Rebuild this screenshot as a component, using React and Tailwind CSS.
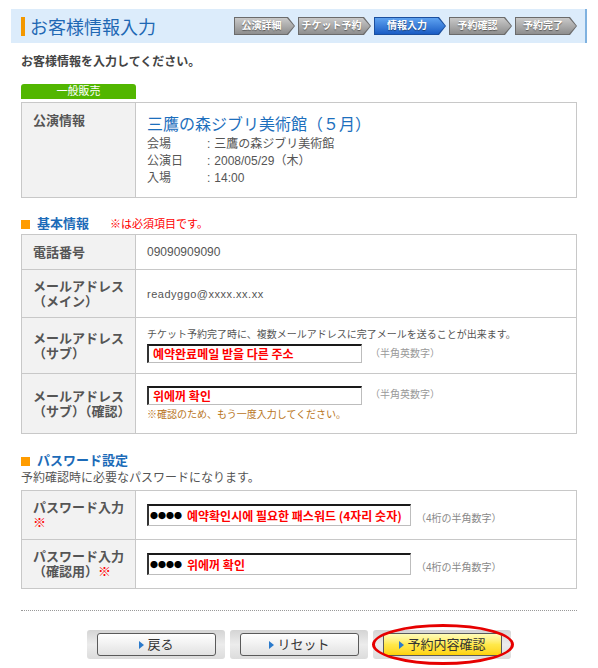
import React from "react";

const steps = [
  { label: "公演詳細", width: "w-[61px]" },
  { label: "チケット予約", width: "w-[73px]" },
  { label: "情報入力", width: "w-[72px]", active: true },
  { label: "予約確認", width: "w-[63px]" },
  { label: "予約完了", width: "w-[62px]" },
];

const StepTab = ({ label, width, active }) => (
  <div
    className={`${width} h-[18px] p-px ${active ? "bg-[#1b4f9e]" : "bg-[#6b6b6b]"} [clip-path:polygon(0_0,calc(100%_-_7px)_0,100%_50%,calc(100%_-_7px)_100%,0_100%)]`}
  >
    <div
      className={`h-full flex items-center justify-center pr-[6px] whitespace-nowrap text-[10px] font-bold text-white leading-none [text-shadow:0_1px_1px_rgba(0,0,0,0.45)] [clip-path:polygon(0_0,calc(100%_-_7px)_0,100%_50%,calc(100%_-_7px)_100%,0_100%)] ${
        active ? "bg-linear-to-b from-[#5ea2f0] to-[#1a5cc4]" : "bg-linear-to-b from-[#c9c9c9] to-[#8e8e8e]"
      }`}
    >
      {label}
    </div>
  </div>
);

const Row = ({ label, h, children }) => (
  <div className={`flex ${h} border-b border-[#c8c8c8]`}>
    <div className="w-[114px] shrink-0 bg-[#f2f2f2] border-r border-[#c8c8c8] flex items-center pl-[11px] text-[13px] font-bold leading-[15px] text-[#555]">
      <div>{label}</div>
    </div>
    <div className="flex-1 flex flex-col justify-center pl-[11px]">{children}</div>
  </div>
);

const FakeInput = ({ className, children }) => (
  <div
    className={`${className} shrink-0 bg-white border-t-2 border-l-2 border-r border-b border-t-[#1a1a1a] border-l-[#333] border-r-[#bdbdbd] border-b-[#bdbdbd] flex items-center pl-[4px] whitespace-nowrap text-[12px] font-bold leading-none text-[#ff0000] font-['Noto_Sans_CJK_KR',sans-serif]`}
  >
    {children}
  </div>
);

const Heading = ({ title, children, className }) => (
  <div className={`flex items-center ml-[21px] h-[16px] ${className}`}>
    <span className="w-[9px] h-[9px] bg-[#ff9c00]" />
    <span className="ml-[7px] text-[13px] font-bold leading-[16px] text-[#1c6bb8]">{title}</span>
    {children}
  </div>
);

const Btn = ({ label, yellow }) => (
  <div className="w-[138px] h-[29px] rounded-[3px] bg-linear-to-b from-[#d4d4d4] via-[#ececec] to-[#dcdcdc] pl-[10px] pr-[9px] py-[3px]">
    <div
      className={`h-full rounded-[3px] border border-[#5a5a5a] flex items-center justify-center text-[13px] text-[#333] ${
        yellow ? "bg-linear-to-b from-[#fffcb8] via-[#ffe94a] to-[#ffd200]" : "bg-linear-to-b from-[#ffffff] to-[#e2e2e2]"
      }`}
    >
      <span className="w-0 h-0 border-y-[4px] border-y-transparent border-l-[5px] border-l-[#2a7acc] mr-[3px]" />
      {label}
    </div>
  </div>
);

export default function App() {
  return (
    <div className="relative w-[598px] h-[668px] overflow-hidden bg-white text-[#555] font-['Liberation_Sans','Noto_Sans_CJK_JP',sans-serif]">
      {/* header */}
      <div className="mt-[9px] ml-[11px] w-[576px] h-[34px] bg-[#dcecfb] border-r-2 border-[#7fb2e0] flex items-center pr-[8px]">
        <span className="ml-[10px] w-[4px] h-[19px] bg-[#f39800]" />
        <span className="ml-[5px] text-[18px] leading-[20px] text-[#1f68b4] font-['Noto_Sans_CJK_JP',sans-serif]">お客様情報入力</span>
        <div className="ml-auto flex items-center gap-[3px]">
          {steps.map((s) => (
            <StepTab key={s.label} {...s} />
          ))}
        </div>
      </div>

      <p className="mt-[12px] ml-[21px] text-[12px] font-bold leading-[14px] text-[#444]">お客様情報を入力してください。</p>

      <div className="mt-[15px] ml-[21px] w-[115px] h-[15px] rounded-t-[3px] bg-[#52b600] text-white text-[11px] leading-[15px] text-center">
        一般販売
      </div>

      {/* 公演情報 */}
      <div className="mt-[3px] ml-[21px] w-[556px] border-t border-x border-[#c8c8c8]">
        <div className="flex h-[95px] border-b border-[#c8c8c8]">
          <div className="w-[114px] shrink-0 bg-[#f2f2f2] border-r border-[#c8c8c8] pl-[11px] pt-[10px] text-[13px] font-bold leading-[16px] text-[#555]">
            公演情報
          </div>
          <div className="flex-1 pl-[11px] pt-[12px]">
            <div className="text-[16px] leading-[20px] text-[#1d6fbd]">三鷹の森ジブリ美術館（５月）</div>
            <div className="mt-[1px] text-[12px] leading-[17px] text-[#555]">
              <div className="flex">
                <span className="w-[60px]">会場</span>
                <span>:</span>
                <span className="ml-[4px]">三鷹の森ジブリ美術館</span>
              </div>
              <div className="flex">
                <span className="w-[60px]">公演日</span>
                <span>:</span>
                <span className="ml-[4px]">2008/05/29（木）</span>
              </div>
              <div className="flex">
                <span className="w-[60px]">入場</span>
                <span>:</span>
                <span className="ml-[4px]">14:00</span>
              </div>
            </div>
          </div>
        </div>
      </div>

      {/* 基本情報 */}
      <Heading title="基本情報" className="mt-[18px]">
        <span className="ml-[21px] text-[11px] leading-[16px] text-[#ff0000]">※は必須項目です。</span>
      </Heading>

      <div className="mt-[2px] ml-[21px] w-[556px] border-t border-x border-[#c8c8c8]">
        <Row label="電話番号" h="h-[35px]">
          <span className="text-[12px] leading-[14px] text-[#555]">09090909090</span>
        </Row>
        <Row
          label={
            <>
              メールアドレス
              <br />
              （メイン）
            </>
          }
          h="h-[48px]"
        >
          <span className="text-[11px] leading-[14px] tracking-[0.5px] text-[#555]">readyggo@xxxx.xx.xx</span>
        </Row>
        <Row
          label={
            <>
              メールアドレス
              <br />
              （サブ）
            </>
          }
          h="h-[56px]"
        >
          <div className="text-[10px] leading-[14px] text-[#555] whitespace-nowrap">
            チケット予約完了時に、複数メールアドレスに完了メールを送ることが出来ます。
          </div>
          <div className="flex items-center mt-[2px]">
            <FakeInput className="w-[215px] h-[19px]">예약완료메일 받을 다른 주소</FakeInput>
            <span className="ml-[8px] text-[10px] leading-[12px] text-[#999]">（半角英数字）</span>
          </div>
        </Row>
        <Row
          label={
            <>
              メールアドレス
              <br />
              （サブ）（確認）
            </>
          }
          h="h-[60px]"
        >
          <div className="flex items-center">
            <FakeInput className="w-[215px] h-[19px]">위에꺼 확인</FakeInput>
            <span className="ml-[8px] text-[10px] leading-[12px] text-[#999]">（半角英数字）</span>
          </div>
          <div className="mt-[3px] text-[10px] leading-[14px] text-[#b8741a]">※確認のため、もう一度入力してください。</div>
        </Row>
      </div>

      {/* パスワード設定 */}
      <Heading title="パスワード設定" className="mt-[19px]" />
      <p className="mt-[2px] ml-[21px] text-[12px] leading-[14px] text-[#555]">予約確認時に必要なパスワードになります。</p>

      <div className="mt-[5px] ml-[21px] w-[556px] border-t border-x border-[#c8c8c8]">
        <Row
          label={
            <>
              パスワード入力
              <br />
              <span className="text-[#ff0000]">※</span>
            </>
          }
          h="h-[49px]"
        >
          <div className="flex items-end">
            <FakeInput className="w-[264px] h-[22px] !pl-[1px]">
              <span className="text-[8px] text-black">●●●●</span>
              <span className="ml-[5px]">예약확인시에 필요한 패스워드 (4자리 숫자)</span>
            </FakeInput>
            <span className="ml-[5px] mb-[1px] text-[10px] leading-[12px] text-[#888]">（4桁の半角数字）</span>
          </div>
        </Row>
        <Row
          label={
            <>
              パスワード入力
              <br />
              （確認用）<span className="text-[#ff0000]">※</span>
            </>
          }
          h="h-[49px]"
        >
          <div className="flex items-end">
            <FakeInput className="w-[264px] h-[22px] !pl-[1px]">
              <span className="text-[8px] text-black">●●●●</span>
              <span className="ml-[5px]">위에꺼 확인</span>
            </FakeInput>
            <span className="ml-[5px] mb-[1px] text-[10px] leading-[12px] text-[#888]">（4桁の半角数字）</span>
          </div>
        </Row>
      </div>

      <div className="mt-[21px] ml-[21px] w-[556px] border-t border-dotted border-[#999]" />

      <div className="mt-[19px] flex justify-center gap-[5px]">
        <Btn label="戻る" />
        <Btn label="リセット" />
        <Btn label="予約内容確認" yellow />
      </div>

      <div className="absolute left-[372px] top-[624px] w-[142px] h-[41px] rounded-[50%] border-[3px] border-[#e60000]" />
    </div>
  );
}
